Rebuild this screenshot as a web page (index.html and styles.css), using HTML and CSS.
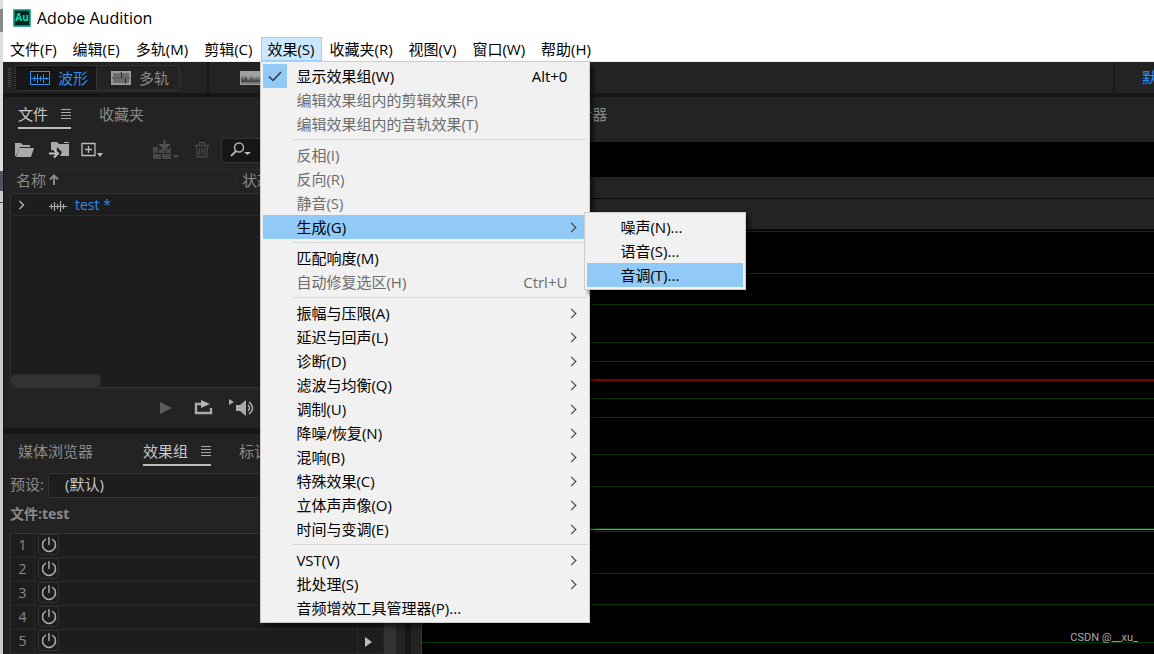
FILE: index.html
```html
<!DOCTYPE html>
<html lang="zh-CN">
<head>
<meta charset="utf-8">
<title>Adobe Audition</title>
<link rel="stylesheet" href="styles.css">
</head>
<body>
<div class="desktop-edge"></div>
<div class="window">
  <header class="titlebar">
    <svg class="app-icon" width="18" height="18" viewBox="0 0 18 18" role="img" aria-label="Au"><rect x="1" y="1" width="16" height="16" fill="#00241f" stroke="#0a9c86" stroke-width="1.6"/><text x="9" y="12" text-anchor="middle" class="app-icon-text">Au</text></svg>
    <h1 class="app-title">Adobe Audition</h1>
  </header>

  <nav class="menubar">
    <button class="menu-button">文件(F)</button>
    <button class="menu-button">编辑(E)</button>
    <button class="menu-button">多轨(M)</button>
    <button class="menu-button">剪辑(C)</button>
    <div class="menu-anchor">
      <button class="menu-button menu-button-open">效果(S)</button>
      <div class="popup effects-menu">
        <button class="item item-checked"><span class="check"><svg width="24" height="24" viewBox="0 0 24 24"><path d="M6 12.500l4 4L18 8" fill="none" stroke="#333" stroke-width="1.500"/></svg></span>显示效果组(W)<span class="shortcut">Alt+0</span></button>
        <button class="item" disabled>编辑效果组内的剪辑效果(F)</button>
        <button class="item" disabled>编辑效果组内的音轨效果(T)</button>
        <hr class="rule">
        <button class="item" disabled>反相(I)</button>
        <button class="item" disabled>反向(R)</button>
        <button class="item" disabled>静音(S)</button>
        <div class="sub-anchor">
          <button class="item item-sub item-hot">生成(G)</button>
          <div class="popup generate-menu">
            <button class="item">噪声(N)...</button>
            <button class="item">语音(S)...</button>
            <button class="item item-hot">音调(T)...</button>
          </div>
        </div>
        <hr class="rule">
        <button class="item">匹配响度(M)</button>
        <button class="item" disabled>自动修复选区(H)<span class="shortcut">Ctrl+U</span></button>
        <hr class="rule">
        <button class="item item-sub">振幅与压限(A)</button>
        <button class="item item-sub">延迟与回声(L)</button>
        <button class="item item-sub">诊断(D)</button>
        <button class="item item-sub">滤波与均衡(Q)</button>
        <button class="item item-sub">调制(U)</button>
        <button class="item item-sub">降噪/恢复(N)</button>
        <button class="item item-sub">混响(B)</button>
        <button class="item item-sub">特殊效果(C)</button>
        <button class="item item-sub">立体声声像(O)</button>
        <button class="item item-sub">时间与变调(E)</button>
        <hr class="rule">
        <button class="item item-sub">VST(V)</button>
        <button class="item item-sub">批处理(S)</button>
        <button class="item">音频增效工具管理器(P)...</button>
      </div>
    </div>
    <button class="menu-button">收藏夹(R)</button>
    <button class="menu-button">视图(V)</button>
    <button class="menu-button">窗口(W)</button>
    <button class="menu-button">帮助(H)</button>
  </nav>

  <div class="toolbar">
    <span class="grip"></span>
    <div class="modes">
      <button class="mode mode-active">
        <svg width="20" height="14" viewBox="0 0 20 14"><rect x=".5" y=".5" width="19" height="13" fill="none" stroke="currentColor"/><path d="M1 7.500h18M4.500 5v5M7.500 3v9M10.500 5v5M13.500 3v9M16.500 6v3" stroke="currentColor"/></svg>
        波形
      </button>
      <button class="mode">
        <svg width="20" height="14" viewBox="0 0 20 14"><path d="M0 0h20v14H0z" fill="#9a9a9a"/><path d="M2 2h8v4H2zM11 2h7v4h-7zM2 8h12v4H2zM15 8h3v4h-3z" fill="#6c6c6c"/><path d="M1 7h18M10.500 1v6M14.500 7v6" stroke="#2c2c2c" fill="none"/></svg>
        多轨
      </button>
    </div>
    <button class="view-toggle" aria-label="频谱显示"><svg width="24" height="14" viewBox="0 0 24 14"><path d="M0 0h24v14H0z" fill="#a0a0a0"/><path d="M1 4l1 5 1-4 1 5 1-6 1 4 1-3 1 6 1-5 1 4 1-6 1 5 1-4 1 6 1-5 1 3 1-4 1 6 1-6 1 4 1-4 2 5v3H1z" fill="#444"/><path d="M1 11h22v2H1z" fill="#777"/></svg></button>
    <a class="workspace" href="#workspace">默认</a>
  </div>

  <main class="workarea">
    <div class="side">
      <section class="panel files">
        <div class="tabs">
          <button class="tab tab-active">文件 <span class="burger"></span></button>
          <button class="tab">收藏夹</button>
        </div>
        <div class="file-tools">
          <button class="tool" aria-label="打开文件"><svg width="24" height="16" viewBox="0 0 24 16"><path d="M1 14V1h6l2 2h7v2H6L2 14z" fill="#aaa"/><path d="M5.500 6H20l-3 9H2z" fill="#aaa"/></svg></button>
          <button class="tool" aria-label="导入文件"><svg width="22" height="18" viewBox="0 0 22 18"><path d="M3 7V1h6l2 2h10v12h-9l2-4-5-5v3H3zM16 1h5v1h-5z" fill="#aaa"/><path d="M1 12.500h7M6 8.500l4 4-4 4" fill="none" stroke="#c4c4c4" stroke-width="2"/></svg></button>
          <button class="tool" aria-label="新建文件"><svg width="24" height="18" viewBox="0 0 24 18"><path d="M2 2.500h13v12H2zM8.500 5v7M5 8.500h7" fill="none" stroke="#bbb" stroke-width="1.300"/><path d="M17 12h6l-3 4z" fill="#bbb"/></svg></button>
          <button class="tool tool-insert" aria-label="插入到多轨"><svg width="26" height="20" viewBox="0 0 26 20"><path d="M0 7h5v2h12V7h1v12H0z" fill="#484848"/><path d="M1 13.500h16M8.500 14v5M12.500 9v5M5.500 9v5" stroke="#232323"/><path d="M11.500 0v7M7.500 5l4 4 4-4z" fill="#505050" stroke="#505050" stroke-width="2"/><path d="M20 15h6l-3 4z" fill="#484848"/></svg></button>
          <button class="tool tool-delete" aria-label="删除"><svg width="14" height="16" viewBox="0 0 14 16"><path d="M0 3.500h14M4.500 3V.700h5V3M1.500 4l1 11h9l1-11M4.500 6v7M7 6v7M9.500 6v7" fill="none" stroke="#484848" stroke-width="1.300"/></svg></button>
          <label class="search"><svg width="22" height="16" viewBox="0 0 22 16"><circle cx="9" cy="5.500" r="4.500" fill="none" stroke="#b0b0b0" stroke-width="1.500"/><path d="M6 9L1 14" stroke="#b0b0b0" stroke-width="2"/><path d="M14 10h7l-3.500 3z" fill="#bbb"/></svg><input class="search-box" type="text" aria-label="搜索"></label>
        </div>
        <div class="list-head"><span class="head-name">名称<svg width="12" height="12" viewBox="0 0 12 12"><path d="M6 11V2M2 5.500L6 1.500l4 4" fill="none" stroke="#8a8a8a" stroke-width="2"/></svg></span><span class="head-state">状态</span></div>
        <div class="file-list">
          <div class="file-row">
            <svg width="8" height="10" viewBox="0 0 8 10"><path d="M1.500 1l4 4-4 4" fill="none" stroke="#aaa" stroke-width="1.500"/></svg>
            <svg width="18" height="12" viewBox="0 0 18 12"><path d="M0 6.500h18M2.500 4v5M5.500 2v9M8.500 4v5M11.500 1v11M14.500 4v5" stroke="#aaa" stroke-width="1.200"/></svg>
            <a class="file-name" href="#test">test *</a>
          </div>
          <span class="thumb"></span>
        </div>
        <div class="transport">
          <button class="tool" aria-label="播放"><svg width="12" height="12" viewBox="0 0 12 12"><path d="M0 0l12 6-12 6z" fill="#5c5c5c"/></svg></button>
          <button class="tool" aria-label="循环播放"><svg width="20" height="16" viewBox="0 0 20 16"><path d="M5 4H2v9h15V8M4 4h8" fill="none" stroke="#aaa" stroke-width="2.400"/><path d="M7 0l9 4-9 4V5z" fill="#b4b4b4"/></svg></button>
          <button class="tool tool-autoplay" aria-label="自动播放"><svg width="27" height="18" viewBox="0 0 27 18"><path d="M0 0l5 3-5 3zM7 6h4l6-5v16l-6-5H7z" fill="#aaa"/><path d="M19 6q3 3 0 6M20 3q7 6 0 12" fill="none" stroke="#aaa" stroke-width="1.500"/></svg></button>
        </div>
      </section>

      <section class="panel rack">
        <div class="tabs">
          <button class="tab tab-wide">媒体浏览器</button>
          <button class="tab tab-active">效果组 <span class="burger"></span></button>
          <button class="tab">标记</button>
        </div>
        <div class="preset"><label for="preset">预设:</label><select id="preset" class="preset-box"><option>(默认)</option></select></div>
        <h2 class="rack-title">文件:test</h2>
        <div class="rack-body">
          <ol class="slots">
            <li class="slot"><span class="num">1</span><button class="power" aria-label="开关 1"><svg width="16" height="16" viewBox="0 0 16 16"><use href="#power"/></svg></button><button class="slot-menu" aria-label="插槽 1"></button></li>
            <li class="slot"><span class="num">2</span><button class="power" aria-label="开关 2"><svg width="16" height="16" viewBox="0 0 16 16"><use href="#power"/></svg></button><button class="slot-menu" aria-label="插槽 2"></button></li>
            <li class="slot"><span class="num">3</span><button class="power" aria-label="开关 3"><svg width="16" height="16" viewBox="0 0 16 16"><use href="#power"/></svg></button><button class="slot-menu" aria-label="插槽 3"></button></li>
            <li class="slot"><span class="num">4</span><button class="power" aria-label="开关 4"><svg width="16" height="16" viewBox="0 0 16 16"><use href="#power"/></svg></button><button class="slot-menu" aria-label="插槽 4"></button></li>
            <li class="slot"><span class="num">5</span><button class="power" aria-label="开关 5"><svg width="16" height="16" viewBox="0 0 16 16"><use href="#power"/></svg></button><button class="slot-menu" aria-label="插槽 5"></button></li>
          </ol>
          <span class="rack-scroll"></span>
        </div>
      </section>
    </div>

    <section class="editor">
      <div class="editor-tabs"><button class="tab">编辑器: test *</button><button class="tab">混音器</button></div>
      <div class="overview"></div>
      <div class="range"></div>
      <div class="ruler"></div>
      <div class="wave">
        <svg class="wave-plot" width="100%" height="424">
          <g stroke="#063806">
            <line x2="100%" y1="1.500" y2="1.500"/><line x2="100%" y1="43.500" y2="43.500"/><line x2="100%" y1="74.500" y2="74.500"/><line x2="100%" y1="112.500" y2="112.500"/><line x2="100%" y1="131.500" y2="131.500"/><line x2="100%" y1="168.500" y2="168.500"/><line x2="100%" y1="187.500" y2="187.500"/><line x2="100%" y1="224.500" y2="224.500"/><line x2="100%" y1="256.500" y2="256.500"/><line x2="100%" y1="298.500" y2="298.500"/><line x2="100%" y1="301.500" y2="301.500"/><line x2="100%" y1="343.500" y2="343.500"/><line x2="100%" y1="374.500" y2="374.500"/><line x2="100%" y1="412.500" y2="412.500"/>
          </g>
          <line x2="100%" y1="299.500" y2="299.500" stroke="#7f917b"/>
          <line x2="100%" y1="150" y2="150" stroke="#840000" stroke-width="2"/>
          <line x1=".5" x2=".5" y2="100%" stroke="#c00000"/>
        </svg>
        <span class="watermark">CSDN @__xu_</span>
      </div>
    </section>
  </main>
</div>
<svg class="defs" width="0" height="0"><defs><g id="power" fill="none" stroke="#aaa" stroke-width="1.500"><path d="M5 2.200a6.500 6.500 0 1 0 6 0M8 0v8"/></g></defs></svg>
</body>
</html>
```
FILE: styles.css
```css
* { box-sizing: border-box; }

body {
  margin: 0;
  height: 100vh;
  display: flex;
  overflow: hidden;
  background: #161616;
  font: 15px/24px "Open Sans", "Noto Sans CJK SC", sans-serif;
}

button, input, select { font: inherit; color: inherit; border: 0; padding: 0; margin: 0; background: none; }
button { text-align: left; white-space: nowrap; }
a { text-decoration: none; }
svg { flex: none; }
.defs { position: absolute; }

.desktop-edge {
  flex: 0 0 3px;
  background: linear-gradient(#ddd 9px, #888 9px 32px, #ddd 32px 171px, #555064 171px 191px, #ccc 191px 202px, #444 202px 203px, #ccc 203px);
}

.window { flex: 1; min-width: 0; display: flex; flex-direction: column; }

.titlebar { flex: 0 0 37px; display: flex; align-items: center; gap: 6px; padding: 0 0 2px 10px; background: #fff; }
.app-icon-text { font: bold 10px "Open Sans", sans-serif; fill: #00e4bb; }
.app-title { margin: 0; font-size: 16px; font-weight: 400; color: #000; }

.menubar { flex: 0 0 25px; display: flex; background: #fff; color: #000; border-bottom: 1px solid #f0f0f0; }
.menu-button { height: 24px; padding: 0 8px 0 6px; border: 1px solid transparent; line-height: 22px; }
.menu-button-open { padding: 0 6px 0 5px; margin-right: 1px; background: #cce8ff; border-color: #99d1ff; }
.menu-anchor { position: relative; }

.popup { position: absolute; z-index: 2; padding: 2px; background: #f1f1f1; border: 1px solid #ccc; box-shadow: 4px 4px 4px rgba(0, 0, 0, .5); color: #000; }
.effects-menu { top: 24px; left: -1px; width: 330px; }
.generate-menu { top: -3px; left: 321px; width: 162px; }
.sub-anchor { position: relative; }
.item { display: flex; width: 100%; height: 24px; padding: 0 20px 0 33px; line-height: 24px; }
.item:disabled { color: #6d6d6d; }
.item-hot { background: #91c9f7; }
.item-checked { padding-left: 0; }
.check { width: 24px; height: 24px; margin-right: 9px; background: #91c9f7; }
.shortcut { margin-left: auto; }
.item-sub { align-items: center; padding-right: 12px; }
.item-sub::after { content: ""; width: 6px; height: 6px; margin-left: auto; border: solid #333; border-width: 1px 1px 0 0; transform: rotate(45deg); }
.rule { height: 1px; margin: 3px 0 3px 30px; border: 0; background: #d7d7d7; }

.toolbar { flex: 0 0 31px; display: flex; align-items: center; padding-left: 5px; background: #232323; color: #8a8a8a; overflow: hidden; }
.grip { width: 3px; height: 19px; margin-right: 4px; background: repeating-linear-gradient(#444 0 1px, #232323 1px 2px); }
.modes { display: flex; border: 1px solid #323232; border-radius: 3px; }
.mode { display: flex; align-items: center; gap: 8px; height: 24px; padding: 0 10px 0 14px; }
.mode-active { padding-right: 8px; color: #2d8ceb; background: #161616; border-right: 1px solid #323232; }
.view-toggle { display: flex; align-items: center; height: 31px; margin-left: 27px; padding-left: 31px; border-left: 2px solid #1a1a1a; }
.workspace { flex: 0 0 41px; height: 31px; margin-left: auto; padding-left: 27px; border-left: 2px solid #1a1a1a; line-height: 31px; white-space: nowrap; overflow: hidden; color: #2d8ceb; }

.workarea { flex: 1; min-height: 0; display: flex; gap: 6px; padding: 4px 0 0 1px; }
.side { flex: 0 0 401px; min-width: 0; display: flex; flex-direction: column; gap: 6px; }
.panel { background: #232323; color: #8a8a8a; padding: 0 6px; overflow: hidden; }
.rack { flex: 1; min-height: 0; }

.tabs { display: flex; gap: 28px; height: 32px; padding: 3px 8px 0; }
.tab { display: flex; align-items: center; gap: 13px; height: 29px; padding-bottom: 2px; color: #8a8a8a; }
.tab-active { color: #c8c8c8; border-bottom: 2px solid #bbb; padding-bottom: 0; }
.tab-wide { padding-right: 22px; }
.burger { width: 10px; height: 10px; background: repeating-linear-gradient(#aaa 0 1px, transparent 1px 3px); }

.file-tools { display: flex; align-items: center; gap: 10px; height: 38px; margin-top: 2px; padding-left: 4px; }
.tool { display: flex; align-items: center; }
.tool-insert { margin-left: 39px; }
.tool-delete { margin: 0 2px 0 6px; }
.search { display: flex; flex: 1; min-width: 0; align-items: center; height: 25px; padding-left: 8px; background: #161616; border: 1px solid #333; border-radius: 3px; }
.search-box { flex: 1; min-width: 0; }

.list-head { display: flex; height: 24px; padding-left: 6px; border: 1px solid #292929; border-width: 1px 0 0; line-height: 20px; }
.head-name { display: flex; align-items: center; gap: 2px; width: 220px; height: 20px; border-right: 1px solid #292929; }
.head-state { padding-left: 6px; }
.file-list { display: flex; flex-direction: column; justify-content: space-between; height: 195px; background: #1d1d1d; border: 1px solid #323232; border-radius: 2px; }
.file-row { display: flex; align-items: center; height: 22px; padding-left: 7px; border-bottom: 1px solid #292929; }
.file-row svg + svg { margin: 2px 8px 0 23px; }
.file-name { color: #2d8ceb; font-size: 14px; }
.thumb { width: 90px; height: 13px; background: #323232; border-radius: 6px; }
.transport { display: flex; align-items: center; gap: 22px; height: 40px; padding-left: 150px; }
.tool-autoplay { margin-left: -7px; }

.preset { display: flex; align-items: center; gap: 4px; height: 25px; margin-top: 7px; line-height: 20px; }
.preset label { padding-bottom: 3px; }
.preset-box { flex: 1; min-width: 0; height: 25px; padding: 0 0 3px 16px; appearance: none; background: #1d1d1d; border: 1px solid #323232; border-radius: 3px; color: #c8c8c8; }
.rack-title { margin: 4px 0 7px; font-size: 14px; line-height: 24px; color: #8a8a8a; }
.rack-body { display: flex; justify-content: space-between; }
.slots { flex: 0 0 373px; list-style: none; margin: 0; padding: 0; border: 1px solid #323232; border-width: 1px 0 0 1px; }
.slot { display: flex; height: 24px; background: #1d1d1d; border-bottom: 1px solid #292929; font-size: 14px; line-height: 22px; }
.num { width: 24px; text-align: center; border-right: 1px solid #292929; }
.power { display: flex; align-items: center; justify-content: center; width: 21px; height: 21px; margin: 0 0 0 3px; border: 1px solid #323232; border-radius: 3px; }
.slot-menu { width: 26px; margin-left: auto; border-left: 1px solid #292929; }
.slot-menu::after { content: ""; display: block; width: 0; margin-left: 7px; border: solid transparent; border-width: 5px 0 5px 7px; border-left-color: #bbb; }
.rack-scroll { width: 12px; margin-right: 3px; background: #323232; }

.editor { flex: 1; min-width: 0; display: flex; flex-direction: column; background: #232323; }
.editor-tabs { display: flex; gap: 48px; height: 45px; padding: 3px 0 0 12px; }
.overview { height: 35px; background: #000; }
.range { height: 22px; border-bottom: 1px solid #0c0c0c; }
.ruler { height: 31px; border-bottom: 1px solid #0c0c0c; }
.wave { position: relative; flex: 1; min-height: 0; margin-left: 10px; background: #000; overflow: hidden; }
.wave-plot { display: block; }
.watermark { position: absolute; right: 16px; bottom: 8px; font: 11px/16px Roboto, sans-serif; color: #aaa; }
```
